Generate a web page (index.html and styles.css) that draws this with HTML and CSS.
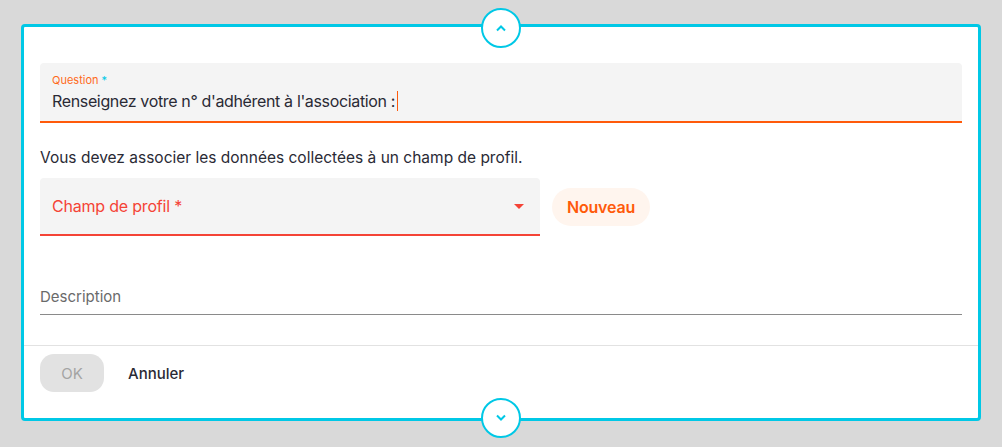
FILE: index.html
```html
<!DOCTYPE html>
<html lang="fr">
<head>
  <meta charset="UTF-8">
  <title>Question</title>
  <link rel="stylesheet" href="styles.css">
</head>
<body>

  <div class="card">
    <button class="toggle toggle-up" type="button">
      <svg width="12" height="8" viewBox="0 0 12 8"><path d="M2 6.5 L6 2.5 L10 6.5" fill="none" stroke="#00c8e6" stroke-width="2"/></svg>
    </button>

    <div class="card-body">
      <div class="field filled">
        <label class="field-label">Question <span class="req">*</span></label>
        <div class="field-value">Renseignez votre n° d'adhérent à l'association :<span class="caret"></span></div>
      </div>

      <p class="hint">Vous devez associer les données collectées à un champ de profil.</p>

      <div class="select-row">
        <div class="select">
          <span>Champ de profil *</span>
          <svg width="10" height="5" viewBox="0 0 10 5"><path d="M0 0 L10 0 L5 5 Z" fill="#f44336"/></svg>
        </div>
        <button class="btn-new" type="button">Nouveau</button>
      </div>

      <div class="description">Description</div>
    </div>

    <div class="card-footer">
      <button class="btn-ok" type="button">OK</button>
      <button class="btn-cancel" type="button">Annuler</button>
    </div>

    <button class="toggle toggle-down" type="button">
      <svg width="12" height="8" viewBox="0 0 12 8"><path d="M2 1.5 L6 5.5 L10 1.5" fill="none" stroke="#00c8e6" stroke-width="2"/></svg>
    </button>
  </div>

</body>
</html>
```

FILE: styles.css
```css
body{
	margin: 0;
	background: #d9d9d9;
	font-family: "Inter", "Liberation Sans", sans-serif;
	color: #2a2a35;
	height: 447px;
	overflow: hidden;
}

.card{
	position: relative;
	margin: 24px 21px 0;
	height: 391px;
	background: #fff;
	border: 3px solid #00c8e6;
	border-radius: 4px;
	display: flex;
	flex-direction: column;
}

.toggle{
	position: absolute;
	left: 50%;
	margin-left: -20px;
	width: 40px;
	height: 40px;
	border-radius: 50%;
	border: 2px solid #00c8e6;
	background: #fff;
	display: flex;
	align-items: center;
	justify-content: center;
	padding: 0;
}
.toggle-up{ top: -19px; }
.toggle-down{ bottom: -20px; }

.card-body{
	padding: 36px 16px 0;
	flex: 1;
}

.field{
	background: #f4f4f4;
	border-radius: 4px 4px 0 0;
	border-bottom: 2px solid #ff5a0a;
	height: 48px;
	padding: 10px 12px 0;
}
.field-label{
	display: block;
	font-size: 11px;
	line-height: 14px;
	color: #ff6a1a;
}
.req{ color: #00c8e6; }
.field-value{
	font-size: 16px;
	line-height: 24px;
	margin-top: 2px;
	letter-spacing: -0.35px;
}
.caret{
	display: inline-block;
	width: 1px;
	height: 20px;
	margin-left: 2px;
	background: #ff5a0a;
	vertical-align: -4px;
}

.hint{
	margin: 25px 0 0;
	font-size: 15.5px;
	line-height: 20px;
}

.select-row{
	display: flex;
	align-items: center;
	gap: 12px;
	margin-top: 10px;
}
.select{
	width: 476px;
	height: 56px;
	padding: 0 12px;
	background: #f4f4f4;
	border-radius: 4px 4px 0 0;
	border-bottom: 2px solid #f44336;
	display: flex;
	align-items: center;
	justify-content: space-between;
	color: #f44336;
	font-size: 16px;
	letter-spacing: -0.2px;
}
.select svg{ margin-right: 4px; }

.btn-new{
	height: 38px;
	padding: 0 15px;
	border: none;
	border-radius: 19px;
	background: #fff5ee;
	color: #ff5a0a;
	font-family: inherit;
	font-size: 16px;
	font-weight: 600;
	letter-spacing: -0.2px;
}

.description{
	margin-top: 44px;
	height: 34px;
	line-height: 34px;
	border-bottom: 1px solid #8a8a8a;
	color: #6a6a6a;
	font-size: 15px;
}

.card-footer{
	border-top: 1px solid #e2e2e2;
	height: 73px;
	padding: 8px 16px 0;
	display: flex;
	align-items: flex-start;
	gap: 24px;
	box-sizing: border-box;
}
.btn-ok{
	width: 64px;
	height: 38px;
	border: none;
	border-radius: 14px;
	background: #e2e2e2;
	color: #a4a4a4;
	font-family: inherit;
	font-size: 15px;
}
.btn-cancel{
	height: 38px;
	border: none;
	background: none;
	padding: 0;
	color: #2a2a35;
	font-family: inherit;
	font-size: 15px;
	font-weight: 500;
}
```
